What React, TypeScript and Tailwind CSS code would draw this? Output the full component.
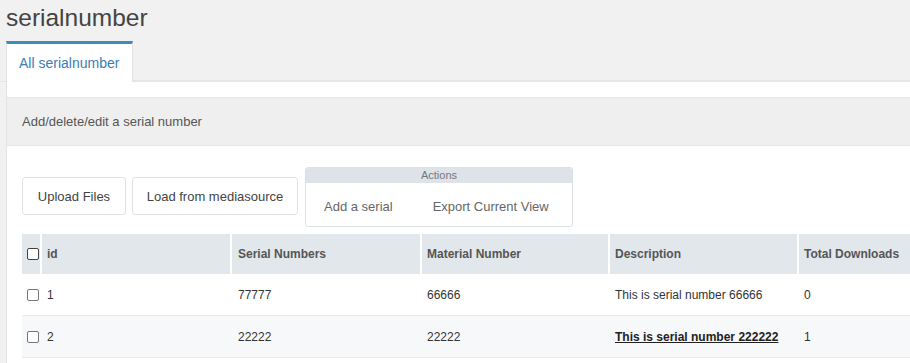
import React from "react";

const rows = [
  { id: "1", serial: "77777", material: "66666", description: "This is serial number 66666", downloads: "0", link: false },
  { id: "2", serial: "22222", material: "22222", description: "This is serial number 222222", downloads: "1", link: true },
];

const cols = "grid grid-cols-[18px_190px_190px_188px_189px_160px]";

function Box({ dark }: { dark?: boolean }) {
  return (
    <span
      className={`inline-block w-[12px] h-[12px] rounded-[2px] border bg-white ${
        dark ? "border-[#444]" : "border-[#777]"
      }`}
    />
  );
}

export default function App() {
  return (
    <div className="w-full h-[363px] overflow-hidden bg-[#f1f1f1] font-['Liberation_Sans',Arial,sans-serif]">
      <h1 className="h-[41px] pl-[6px] pt-[6px] text-[24.5px] leading-[24px] text-[#444]">serialnumber</h1>

      <div className="flex h-[41px]">
        <div className="w-[6px] border-b border-[#e5e5e5]" />
        <div className="w-[127px] bg-white border-t-[3px] border-t-[#3c8dbc] border-l border-r border-[#e3e3e3] flex items-center pl-[12px] text-[14px] leading-[14px] text-[#3c7db5]">
          All serialnumber
        </div>
        <div className="flex-1 border-b-2 border-[#e6e6e6]" />
      </div>

      <div className="ml-[6px] border-l border-[#e3e3e3] bg-white pt-[15px] h-[281px]">
        <div className="h-[49px] bg-[#efefef] border-y border-[#e6e6e6] flex items-center px-[15px] text-[13px] text-[#555]">
          Add/delete/edit a serial number
        </div>

        <div className="pl-[15px] pt-[21px]">
          <div className="flex items-start gap-[6px]">
            <button className="mt-[10px] h-[38px] w-[104px] pt-[2px] flex items-center justify-center border border-[#e2e2e2] rounded-[3px] bg-white text-[13px] text-[#444]">
              Upload Files
            </button>
            <button className="mt-[10px] h-[38px] w-[166px] pt-[2px] flex items-center justify-center border border-[#e2e2e2] rounded-[3px] bg-white text-[13px] text-[#444]">
              Load from mediasource
            </button>
            <div className="ml-[1px] w-[268px] h-[60px] border border-[#dde1e5] rounded-[3px] bg-white overflow-hidden flex flex-col">
              <div className="h-[15px] bg-[#dde3e8] flex items-center justify-center text-[11px] leading-[11px] text-[#777]">
                Actions
              </div>
              <div className="flex-1 flex items-center pt-[4px] text-[13px] text-[#666]">
                <span className="pl-[18px] pr-[20px]">Add a serial</span>
                <span className="pl-[20px]">Export Current View</span>
              </div>
            </div>
          </div>

          <div className="mt-[7px] w-[1000px] text-[12px]">
            <div className={`${cols} h-[40px] bg-[#e2e7eb] font-bold text-[#555]`}>
              <div className="flex items-center pl-[5px]">
                <Box dark />
              </div>
              <div className="flex items-center border-l-2 border-white pl-[5px]">id</div>
              <div className="flex items-center border-l-2 border-white pl-[6px]">Serial Numbers</div>
              <div className="flex items-center border-l-2 border-white pl-[5px]">Material Number</div>
              <div className="flex items-center border-l-2 border-white pl-[5px]">Description</div>
              <div className="flex items-center border-l-2 border-white pl-[5px]">Total Downloads</div>
            </div>
            {rows.map((r, i) => (
              <div
                key={r.id}
                className={`${cols} h-[42px] border-b border-[#e8eaec] text-[#333] ${
                  i % 2 === 1 ? "bg-[#f7f8fa]" : "bg-white"
                }`}
              >
                <div className="flex items-center pl-[5px]">
                  <Box />
                </div>
                <div className="flex items-center border-l-2 border-transparent pl-[5px]">{r.id}</div>
                <div className="flex items-center border-l-2 border-transparent pl-[6px]">{r.serial}</div>
                <div className="flex items-center border-l-2 border-transparent pl-[5px]">{r.material}</div>
                <div className="flex items-center border-l-2 border-transparent pl-[5px]">
                  {r.link ? (
                    <a href="#" className="font-bold underline text-[#222]">
                      {r.description}
                    </a>
                  ) : (
                    r.description
                  )}
                </div>
                <div className="flex items-center border-l-2 border-transparent pl-[5px]">{r.downloads}</div>
              </div>
            ))}
          </div>
        </div>
      </div>
    </div>
  );
}
